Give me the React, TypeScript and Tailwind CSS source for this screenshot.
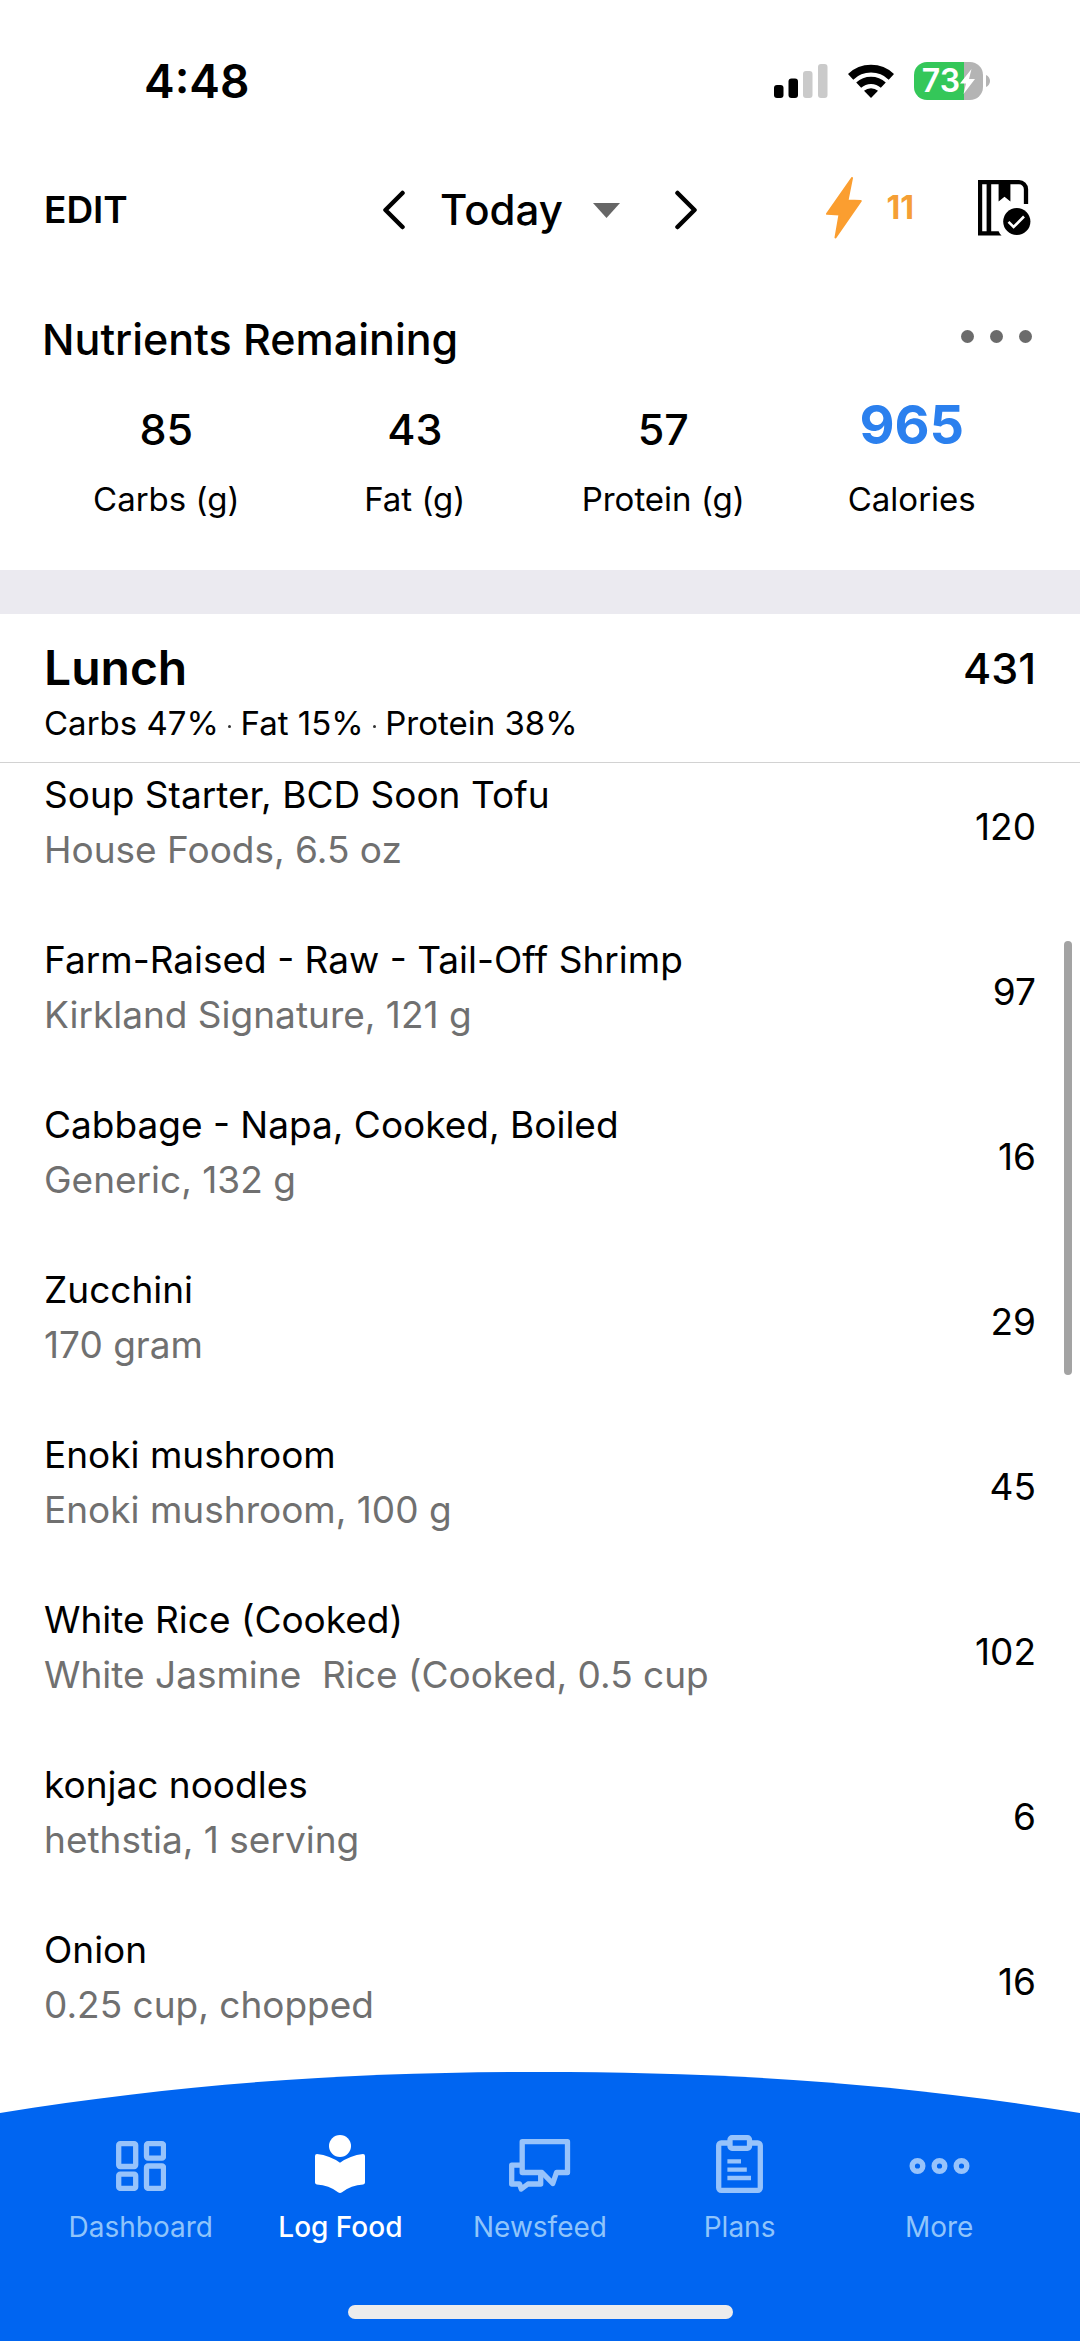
import React from "react";

const foods = [
  { name: "Soup Starter, BCD Soon Tofu", detail: "House Foods, 6.5 oz", calories: 120 },
  { name: "Farm-Raised - Raw - Tail-Off Shrimp", detail: "Kirkland Signature, 121 g", calories: 97 },
  { name: "Cabbage - Napa, Cooked, Boiled", detail: "Generic, 132 g", calories: 16 },
  { name: "Zucchini", detail: "170 gram", calories: 29 },
  { name: "Enoki mushroom", detail: "Enoki mushroom, 100 g", calories: 45 },
  { name: "White Rice (Cooked)", detail: "White Jasmine  Rice (Cooked, 0.5 cup", calories: 102 },
  { name: "konjac noodles", detail: "hethstia, 1 serving", calories: 6 },
  { name: "Onion", detail: "0.25 cup, chopped", calories: 16 },
];

const nutrients = [
  { value: 85, label: "Carbs (g)" },
  { value: 43, label: "Fat (g)" },
  { value: 57, label: "Protein (g)" },
];

function StatusBar() {
  return (
    <div className="flex h-[162px] items-center justify-between pr-[90px] pl-36">
      <span className="text-[46px] leading-[56px] font-semibold">4:48</span>
      <div className="flex items-center gap-5">
        <svg width="54" height="34" viewBox="0 0 54 34" aria-label="Signal">
          <rect x="0" y="21" width="9.5" height="13" rx="3" fill="#000" />
          <rect x="14.5" y="14.5" width="9.5" height="19.5" rx="3" fill="#000" />
          <rect x="29" y="7" width="9.5" height="27" rx="3" fill="#cacaca" />
          <rect x="44" y="0" width="9.5" height="34" rx="3" fill="#cacaca" />
        </svg>
        <svg width="46" height="34" viewBox="0 0 46 34" fill="none" stroke="#000" aria-label="Wi-Fi">
          <path d="M2.6 12.8A29.6 29.6 0 0 1 43.4 12.8" strokeWidth="7.8" />
          <path d="M10.7 21.2A17.9 17.9 0 0 1 35.3 21.2" strokeWidth="7.2" />
          <path d="M16 26.8A10.5 10.5 0 0 1 30 26.8L23 34Z" fill="#000" stroke="none" />
        </svg>
        <div className="flex items-center gap-[3px]">
          <div className="flex h-[38px] w-[69px] items-center justify-center rounded-[13px] bg-[linear-gradient(90deg,#34c759_73%,#b4b4b4_73%)] text-white">
            <span className="text-[32px] leading-[38px] font-semibold">73</span>
            <svg width="15" height="25" viewBox="0 0 15 25" fill="currentColor" aria-hidden="true">
              <path d="M11.5 0L0 14.5H6L3.5 25L15 10H9Z" />
            </svg>
          </div>
          <svg width="4" height="12" viewBox="0 0 4 12" aria-hidden="true">
            <path d="M0 0C2.6 1.2 4 3.5 4 6S2.6 10.8 0 12Z" fill="#b4b4b4" />
          </svg>
        </div>
      </div>
    </div>
  );
}

function Toolbar() {
  return (
    <div className="grid h-24 grid-cols-[1fr_auto_1fr] items-center px-11">
      <button className="justify-self-start text-[37px] leading-[48px] font-semibold">EDIT</button>
      <div className="flex items-center">
        <button aria-label="Previous day">
          <svg width="24" height="40" viewBox="0 0 24 40" fill="none" stroke="#000" strokeWidth="4.5" strokeLinecap="round" strokeLinejoin="round">
            <path d="M20.5 3L3.5 20L20.5 37" />
          </svg>
        </button>
        <label className="ml-[34px] flex items-center gap-[30px]">
          <select aria-label="Day" className="field-sizing-content appearance-none bg-transparent text-[42px] leading-[56px] font-medium outline-none">
            <option>Today</option>
          </select>
          <svg width="27" height="15" viewBox="0 0 27 15" aria-hidden="true">
            <path d="M0 0H27L13.5 15Z" fill="#666" />
          </svg>
        </label>
        <button aria-label="Next day" className="ml-[54px]">
          <svg width="24" height="40" viewBox="0 0 24 40" fill="none" stroke="#000" strokeWidth="4.5" strokeLinecap="round" strokeLinejoin="round">
            <path d="M3.5 3L20.5 20L3.5 37" />
          </svg>
        </button>
      </div>
      <div className="flex items-center justify-self-end pr-1 pb-1">
        <button className="flex items-center gap-6 text-[32px] leading-10 font-bold text-[#f59f35]">
          <svg width="36" height="62" viewBox="0 0 36 62" fill="#fb9e30" stroke="#fb9e30" strokeWidth="2" strokeLinejoin="round" aria-hidden="true">
            <path d="M26 1L21.5 23.5L34.8 24L9.5 60.5L13.5 37.5L1 36.8Z" />
          </svg>
          11
        </button>
        <button aria-label="Complete day" className="ml-16">
          <svg width="54" height="56" viewBox="0 0 54 56">
            <path d="M2.1 2.2H41A7 7 0 0 1 48 9.2V24" fill="none" stroke="#000" strokeWidth="4.3" />
            <path d="M0 0H4.2V55.5H0Z M8.6 2H13.2V54H8.6Z M0 51.2H20.6Q21.5 53.6 23.6 55.5H0Z M20.6 2H32.4V21.4L26.5 16.8L20.6 21.4Z" />
            <circle cx="38.8" cy="41.5" r="13.6" />
            <path d="M30.5 41.8L35.6 47L46 36.5" fill="none" stroke="#fff" strokeWidth="2.6" />
          </svg>
        </button>
      </div>
    </div>
  );
}

function Nutrients() {
  return (
    <section className="pt-[53px] pb-[51px]">
      <div className="flex items-center justify-between px-[42px]">
        <h2 className="text-[43px] leading-[56px] font-medium">Nutrients Remaining</h2>
        <button aria-label="Nutrient options" className="flex gap-4 pr-1.5 pb-1.5">
          <span className="size-[13px] rounded-full bg-[#6b6b6b]" />
          <span className="size-[13px] rounded-full bg-[#6b6b6b]" />
          <span className="size-[13px] rounded-full bg-[#6b6b6b]" />
        </button>
      </div>
      <dl className="mt-[33px] grid grid-cols-4 pr-11 pl-[42px] text-center">
        {nutrients.map((n) => (
          <div key={n.label} className="flex flex-col-reverse gap-5">
            <dt className="text-[33px] leading-10">{n.label}</dt>
            <dd className="h-[59px] text-[43px] leading-[58px] font-medium">{n.value}</dd>
          </div>
        ))}
        <div className="flex flex-col-reverse gap-5">
          <dt className="text-[33px] leading-10">Calories</dt>
          <dd className="h-[59px] text-[54px] leading-[50px] font-bold text-[#2b80ee]">965</dd>
        </div>
      </dl>
    </section>
  );
}

function Meal() {
  return (
    <section>
      <header className="flex items-start justify-between border-b border-[#d2d2d2] px-11 pt-[26px] pb-[19px]">
        <div>
          <h2 className="text-[48px] leading-[56px] font-semibold">Lunch</h2>
          <p className="mt-[7px] text-[33px] leading-10">
            Carbs 47% <Dot /> Fat 15% <Dot /> Protein 38%
          </p>
        </div>
        <span className="text-[43px] leading-[56px] font-medium">431</span>
      </header>
      <div className="relative">
        <ul className="flex flex-col gap-[55px] pt-1 pb-10">
          {foods.map((f) => (
            <li key={f.name} className="flex items-center justify-between px-11 text-[37px] leading-[55px]">
              <div>
                <p>{f.name}</p>
                <p className="whitespace-pre text-[#707070]">{f.detail}</p>
              </div>
              <span className="pt-2">{f.calories}</span>
            </li>
          ))}
        </ul>
        <div className="absolute top-[178px] right-2 h-[434px] w-2 rounded-full bg-[#a3a3a3]" />
      </div>
    </section>
  );
}

function Dot() {
  return <span className="inline-block size-[3px] rounded-full bg-[#333] align-middle" />;
}

function DashboardIcon() {
  return (
    <svg width="50" height="54" viewBox="0 -4 50 54" fill="none" stroke="#97c3fb" strokeWidth="5.3">
      <rect x="2.7" y="2.7" width="17" height="22.8" rx="1.5" />
      <rect x="30.5" y="2.7" width="17" height="14.4" rx="1.5" />
      <rect x="2.7" y="33.2" width="17" height="14.2" rx="1.5" />
      <rect x="30.5" y="25" width="17" height="22.4" rx="1.5" />
    </svg>
  );
}

function LogFoodIcon() {
  return (
    <svg width="50" height="58" viewBox="0 0 50 58" fill="#fff">
      <circle cx="25" cy="11" r="11" />
      <path d="M2 19Q15 20.5 25 27.8Q35 20.5 48 19Q50 19 50 21V47.5Q50 49.3 48.2 49.4Q36 50 27 57.2Q25 58.6 23 57.2Q14 50 1.8 49.4Q0 49.3 0 47.5V21Q0 19 2 19Z" />
    </svg>
  );
}

function NewsfeedIcon() {
  return (
    <svg width="62" height="58" viewBox="0 -4 62 58" fill="none" stroke="#97c3fb" strokeWidth="5.3" strokeLinejoin="round">
      <path d="M13.2 2.7H58.5V33.5H47.5L43.8 44.5L33 33.5H13.2Z" />
      <path d="M13 26.2H2.7V45H10.5L12.3 50L19 45H31.7V34" />
    </svg>
  );
}

function PlansIcon() {
  return (
    <svg width="47" height="58" viewBox="0 0 47 58" fill="none" stroke="#97c3fb" strokeWidth="5.3">
      <rect x="2.7" y="8" width="41.6" height="47.3" rx="2.5" />
      <rect x="14" y="2.7" width="19.5" height="10.6" rx="2" fill="#0065f1" />
      <path d="M11.4 26.3H25M11.4 34.7H30.8M11.4 43H35" strokeWidth="4.3" />
    </svg>
  );
}

function MoreIcon() {
  return (
    <svg width="61" height="20" viewBox="0 -4 61 20" fill="none" stroke="#97c3fb" strokeWidth="5.4">
      <circle cx="8.5" cy="8" r="5.3" />
      <circle cx="30.5" cy="8" r="5.3" />
      <circle cx="52.5" cy="8" r="5.3" />
    </svg>
  );
}

const tabs = [
  { label: "Dashboard", icon: <DashboardIcon />, active: false },
  { label: "Log Food", icon: <LogFoodIcon />, active: true },
  { label: "Newsfeed", icon: <NewsfeedIcon />, active: false },
  { label: "Plans", icon: <PlansIcon />, active: false },
  { label: "More", icon: <MoreIcon />, active: false },
];

function TabBar() {
  return (
    <footer>
      <svg className="block h-[41px] w-full" viewBox="0 0 1080 41" preserveAspectRatio="none" aria-hidden="true">
        <path d="M0 41C190 10 360 0 540 0S890 10 1080 41Z" fill="#0065f1" />
      </svg>
      <div className="bg-[#0065f1] pt-[22px] pb-[22px]">
        <nav className="grid grid-cols-5 px-[41px]">
          {tabs.map((t) => (
            <a
              key={t.label}
              href="#"
              aria-current={t.active ? "page" : undefined}
              className={
                t.active
                  ? "flex flex-col items-center gap-4 text-[28px] leading-9 font-medium text-white"
                  : "flex flex-col items-center gap-4 text-[28px] leading-9 text-[#8fc4fb]"
              }
            >
              <span className="flex h-[58px] items-center">{t.icon}</span>
              {t.label}
            </a>
          ))}
        </nav>
        <div className="mx-auto mt-[60px] h-3.5 w-[385px] rounded-full bg-[#ececec]" />
      </div>
    </footer>
  );
}

export default function App() {
  return (
    <div className="flex min-h-screen flex-col bg-white font-['Inter',sans-serif] text-black">
      <StatusBar />
      <Toolbar />
      <main className="flex-1">
        <Nutrients />
        <div className="h-11 bg-[#ebeaf0]" />
        <Meal />
      </main>
      <TabBar />
    </div>
  );
}
